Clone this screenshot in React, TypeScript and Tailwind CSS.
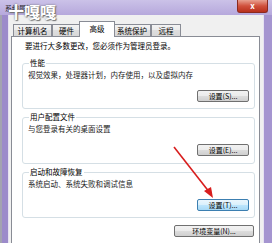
import React from 'react';

const cjk = "font-['Noto_Sans_CJK_SC','Noto_Sans',sans-serif]";

const WinButton = ({ label, focused, className = '' }: { label: string; focused?: boolean; className?: string }) => (
  <button
    className={`h-[12px] rounded-[2px] border text-[7px] leading-[10px] text-black ${
      focused
        ? 'border-[#3c7fb1] bg-[linear-gradient(#eaf6fd,#d9f0fc_50%,#bee6fd_50%,#a7d9f5)]'
        : 'border-[#707070] bg-[linear-gradient(#f2f2f2,#ebebeb_50%,#dddddd_50%,#cfcfcf)]'
    } ${className}`}
  >
    {label}
  </button>
);

const GroupBox = ({ title, desc, button, focused, height, className = '' }: {
  title: string; desc: string; button: string; focused?: boolean; height: string; className?: string;
}) => (
  <fieldset className={`ml-[10px] mr-[4px] ${height} rounded-[3px] border border-[#d5dfe5] px-[5px] flex flex-col ${className}`}>
    <legend className="ml-[1px] px-[1px] text-[7.5px] leading-[8px] text-black">{title}</legend>
    <div className="mt-[3px] text-[7.5px] leading-[10px] text-[#1a1a1a]">{desc}</div>
    <div className="mt-[10px] flex justify-end">
      <WinButton label={button} focused={focused} className="w-[52px]" />
    </div>
  </fieldset>
);

const tabs = [
  { name: '计算机名', w: 'w-[39px]' },
  { name: '硬件', w: 'w-[29px]' },
  { name: '高级', w: 'w-[36px]', active: true },
  { name: '系统保护', w: 'w-[38px]' },
  { name: '远程', w: 'w-[30px]' },
];

export default function App() {
  return (
    <div className={`relative w-[272px] h-[243px] overflow-hidden bg-[#b9acdc] ${cjk}`}>
      {/* title bar */}
      <div className="relative flex h-[15px] items-start bg-[linear-gradient(180deg,#cbc2e8,#b6a8dc)]">
        <span className="ml-[5px] mt-[4px] text-[7px] leading-[8px] text-[#222]">系统属性</span>
        <span className="absolute left-[8px] top-[2px] text-[16px] font-bold leading-[18px] text-white [text-shadow:0_0_2px_#666,1px_1px_1px_#777]">
          十嘎嘎
        </span>
        <div className="ml-auto mr-[4px] flex h-[13px] w-[31px] items-center justify-center rounded-b-[3px] border border-t-0 border-[#8b2a1f] bg-[linear-gradient(180deg,#e8a090,#d0503c_50%,#b8301c)] text-[8px] font-bold leading-[8px] text-white">
          x
        </div>
      </div>

      <div className="flex h-[228px]">
        {/* left frame */}
        <div className="w-[9px] border-l-2 border-[#a3a3b0] bg-[#9c8bca] shadow-[inset_-1px_0_0_#e6e2f2]" />

        {/* dialog body */}
        <div className="flex flex-1 flex-col bg-[#f0f0f0] pl-[2px] pr-[3px] pt-[6px]">
          <div className="flex h-[15px] items-end pl-[2px]">
            {tabs.map((t) =>
              t.active ? (
                <div
                  key={t.name}
                  className={`${t.w} relative z-10 -mx-[2px] -mb-[1px] h-[16px] border border-b-0 border-[#898c95] bg-white pt-[2px] text-center text-[7.5px] leading-[10px] text-black`}
                >
                  {t.name}
                </div>
              ) : (
                <div
                  key={t.name}
                  className={`${t.w} h-[12px] border border-b-0 border-[#898c95] bg-[linear-gradient(#f3f3f3,#ebebeb_50%,#dedede_50%,#d8d8d8)] text-center text-[7.5px] leading-[11px] text-black`}
                >
                  {t.name}
                </div>
              )
            )}
          </div>

          <div className="flex flex-1 flex-col border border-b-0 border-[#898c95] bg-white">
            <div className="pl-[13px] pt-[4px] text-[7.5px] leading-[10px] text-black">
              要进行大多数更改，您必须作为管理员登录。
            </div>
            <GroupBox title="性能" desc="视觉效果，处理器计划，内存使用，以及虚拟内存" button="设置(S)..." height="h-[50px]" className="mt-[8px]" />
            <GroupBox title="用户配置文件" desc="与您登录有关的桌面设置" button="设置(E)..." height="h-[51px]" className="mt-[4px]" />
            <GroupBox title="启动和故障恢复" desc="系统启动、系统失败和调试信息" button="设置(T)..." focused height="h-[50px]" className="mt-[4px]" />
            <div className="mt-[7px] flex justify-end pr-[5px]">
              <WinButton label="环境变量(N)..." className="w-[80px]" />
            </div>
          </div>
        </div>

        {/* right frame */}
        <div className="w-[9px] bg-[#a595d0] shadow-[inset_1px_0_0_#e6e2f2]" />
      </div>

      {/* red arrow annotation */}
      <svg className="absolute left-0 top-0" width="272" height="243" viewBox="0 0 272 243">
        <line x1="174" y1="147" x2="210" y2="193" stroke="#d81e1e" strokeWidth="1.6" />
        <polygon points="213,198 204,191 211,187" fill="#d81e1e" />
      </svg>
    </div>
  );
}
